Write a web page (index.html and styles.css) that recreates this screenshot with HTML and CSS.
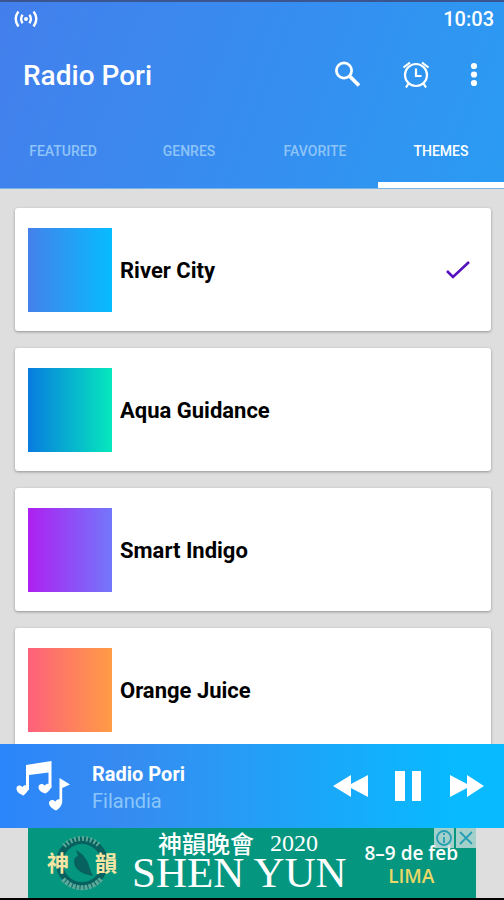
FILE: index.html
```html
<!DOCTYPE html>
<html lang="en">
<head>
<meta charset="utf-8">
<meta name="viewport" content="width=device-width, initial-scale=1">
<title>Radio Pori</title>
<link rel="stylesheet" href="styles.css">
</head>
<body>
<header class="header">
  <div class="status">
    <svg class="cast" viewBox="0 0 24 18" aria-hidden="true">
      <circle cx="12" cy="9" r="2"/>
      <path d="M8.6 4.8Q5.6 9 8.6 13.2M15.4 4.8Q18.4 9 15.4 13.2M4.4 1.5Q-1 9 4.4 16.5M19.6 1.5Q25 9 19.6 16.5"/>
    </svg>
    <time>10:03</time>
  </div>
  <div class="toolbar">
    <h1>Radio Pori</h1>
    <button class="tool" aria-label="Search">
      <svg viewBox="0 0 28 28"><g fill="none" stroke="#fff" stroke-width="2.800"><circle cx="10" cy="9.500" r="7.600"/><path d="M15.500 15L25 24.500" stroke-width="3.800"/></g></svg>
    </button>
    <button class="tool" aria-label="Alarm">
      <svg viewBox="0 0 28 28"><g fill="none" stroke="#fff" stroke-width="2.200"><circle cx="14" cy="14" r="11"/><path d="M14 7.500v7.500h5.500M1.500 6.500L8 1.500M26.500 6.500L20 1.500M6.500 22.500L4 26.500M21.500 22.500L24 26.500"/></g></svg>
    </button>
    <button class="tool more" aria-label="More options">
      <svg viewBox="0 0 28 28"><g fill="#fff"><circle cx="14" cy="5" r="3.100"/><circle cx="14" cy="13.500" r="3.100"/><circle cx="14" cy="22" r="3.100"/></g></svg>
    </button>
  </div>
  <nav class="tabs">
    <a href="#featured">FEATURED</a>
    <a href="#genres">GENRES</a>
    <a href="#favorite">FAVORITE</a>
    <a href="#themes" class="active" aria-current="page">THEMES</a>
  </nav>
</header>

<main class="themes">
  <button class="card">
    <span class="swatch river"></span>
    <span class="name">River City</span>
    <svg class="check" viewBox="0 0 26 20" aria-label="Selected"><path d="M2 11l6 6L24 2"/></svg>
  </button>
  <button class="card">
    <span class="swatch aqua"></span>
    <span class="name">Aqua Guidance</span>
  </button>
  <button class="card">
    <span class="swatch indigo"></span>
    <span class="name">Smart Indigo</span>
  </button>
  <button class="card">
    <span class="swatch orange"></span>
    <span class="name">Orange Juice</span>
  </button>
</main>

<section class="player">
  <svg class="notes" viewBox="0 0 54 50" aria-hidden="true">
    <path d="M10 4L35.500 0V27H32.500V11.500L13 14V29H10Z"/>
    <path d="M12.700 26C11 24 8 23.500 6.500 26C4 23 0 24.500 .5 28C1 31.500 4 33 7.500 34.500C10 32.500 13 29.500 12.700 26Z"/>
    <path d="M35.300 24C33 22 30.500 22.500 28.800 24.500C26.500 21.500 22 23 22.500 26.500C23 30 26 31.500 29.500 32.500C32.500 30.500 35.500 28 35.300 24Z"/>
    <path d="M43.500 17L54 23.500L46.200 27V42H43.500Z"/>
    <path d="M46 40C44 37.500 41 38 39.500 40.500C37 37.500 32.500 39 33 42.500C33.500 46 37 48 40 49.500C43.500 47.500 46.500 44 46 40Z"/>
  </svg>
  <div class="track">
    <strong>Radio Pori</strong>
    <span>Filandia</span>
  </div>
  <div class="controls">
    <button aria-label="Previous"><svg viewBox="0 0 36 36"><path d="M0 18L18 7v9L35 7v22L18 20v9Z"/></svg></button>
    <button aria-label="Pause"><svg viewBox="0 0 36 36"><path d="M4 3h10v30H4ZM21 3h9v30h-9Z"/></svg></button>
    <button aria-label="Next"><svg viewBox="0 0 36 36"><path d="M35 18L18 7v9L1 7v22L18 20v9Z"/></svg></button>
  </div>
</section>

<aside class="ad-strip">
  <div class="ad">
    <svg class="emblem" viewBox="0 0 72 62" aria-hidden="true">
      <circle cx="36" cy="31" r="22.500" fill="none" stroke="#07625f" stroke-width="7"/>
      <g fill="none" stroke="#5ca99a" stroke-width="5">
        <path d="M18 14A25 25 0 0 1 54 14" stroke-dasharray="2 2"/>
        <path d="M17 47A25 25 0 0 0 55 47" stroke-dasharray="3 1"/>
      </g>
      <path d="M30 18C33 20 37 22 39 26C43 30 43 37 47 44C40 43 32 40 29 34C27 29 28 25 32 24Z" fill="#07625f"/>
      <g class="emblem-text"><text x="1" y="39">神</text><text x="49" y="39">韻</text></g>
    </svg>
    <div class="show">
      <div class="subtitle"><span class="cjk">神韻晚會</span> <span>2020</span></div>
      <div class="brand">SHEN YUN</div>
    </div>
    <div class="dates"><span>8–9 de feb</span><span class="city">LIMA</span></div>
    <div class="ad-actions">
      <button aria-label="Ad information"><svg viewBox="0 0 20 20"><circle cx="10" cy="10" r="7"/><path d="M10 9v6M10 5v2"/></svg></button>
      <button aria-label="Close ad"><svg viewBox="0 0 20 20"><path d="M4 4l12 12M16 4L4 16"/></svg></button>
    </div>
  </div>
</aside>
</body>
</html>
```
FILE: styles.css
```css
* { box-sizing: border-box; }

body {
  margin: 0;
  height: 100vh;
  display: flex;
  flex-direction: column;
  overflow: hidden;
  background: #dedede;
  font-family: Roboto, "Noto Sans CJK TC", sans-serif;
}

button {
  border: 0;
  padding: 0;
  background: none;
  color: inherit;
  font: inherit;
}

svg { display: block; }

.header {
  flex: none;
  color: #fff;
  border-top: 2px solid #3b5590;
  border-bottom: 1px solid #79b5e8;
  background: linear-gradient(110deg, #437fec, #378df0 50%, #2a9bf2);
}

.status {
  display: flex;
  align-items: center;
  justify-content: space-between;
  height: 34px;
  padding: 0 10px 0 14px;
  font-size: 20px;
  font-weight: 500;
}

.cast {
  width: 24px;
  height: 18px;
  fill: #fff;
}

.cast path {
  fill: none;
  stroke: #fff;
  stroke-width: 2.4;
}

.toolbar {
  display: flex;
  align-items: center;
  height: 78px;
  padding: 0 16px 0 23px;
}

.toolbar h1 {
  flex: 1;
  margin: 0;
  font-size: 28px;
  font-weight: 500;
}

.tool {
  width: 28px;
  margin-left: 40px;
}

.tool svg { width: 28px; height: 28px; }

.more { margin-left: 30px; }

.tabs {
  display: grid;
  grid-template-columns: repeat(4, 1fr);
  height: 74px;
}

.tabs a {
  display: flex;
  align-items: center;
  justify-content: center;
  border-top: 6px solid transparent;
  border-bottom: 6px solid transparent;
  color: #8ec4f8;
  font-size: 14px;
  font-weight: 500;
  text-decoration: none;
}

.tabs .active {
  color: #fff;
  border-bottom-color: #fff;
}

.themes {
  flex: 1;
  min-height: 0;
  overflow: hidden;
  display: flex;
  flex-direction: column;
  gap: 17px;
  padding: 19px 13px 0 15px;
}

.card {
  flex: none;
  display: flex;
  align-items: center;
  gap: 8px;
  height: 123px;
  padding: 0 20px 0 13px;
  border-radius: 3px;
  background: #fff;
  box-shadow: 0 1px 3px rgba(0, 0, 0, .35);
  color: #000;
  font-size: 22px;
  font-weight: 700;
  text-align: left;
}

.swatch { width: 84px; height: 84px; }
.river { background: linear-gradient(90deg, #4481ea, #06bcff); }
.aqua { background: linear-gradient(90deg, #087be0, #06e8bd); }
.indigo { background: linear-gradient(90deg, #ae20f0, #7377fb); }
.orange { background: linear-gradient(90deg, #fd617b, #ff9c45); }

.name {
  flex: 1;
  padding-top: 2px;
}

.check {
  width: 26px;
  height: 20px;
  fill: none;
  stroke: #5411bd;
  stroke-width: 2.6;
}

.player {
  flex: none;
  display: flex;
  align-items: center;
  height: 84px;
  padding: 0 19px 0 16px;
  color: #fff;
  background: linear-gradient(90deg, #2a86fa, #378bf0 24%, #08baff 90%);
}

.notes {
  width: 54px;
  height: 50px;
  margin-right: 22px;
  fill: #fff;
}

.track {
  flex: 1;
  display: flex;
  flex-direction: column;
  padding-top: 3px;
  font-size: 20px;
  line-height: 27px;
}

.track strong { font-weight: 700; }
.track span { color: #8bc6fb; }

.controls { display: flex; gap: 22px; }
.controls svg { width: 36px; height: 36px; fill: #fff; }

.ad-strip {
  flex: none;
  border-bottom: 2px solid #000;
}

.ad {
  position: relative;
  display: flex;
  align-items: center;
  max-width: 448px;
  height: 70px;
  margin: 0 auto;
  padding: 0 18px;
  overflow: hidden;
  background: #04967f;
  color: #fff;
}

.emblem { width: 72px; height: 62px; }

.emblem-text {
  fill: #f5e5a4;
  font-family: "Noto Sans CJK TC", sans-serif;
  font-size: 22px;
  font-weight: 700;
}

.show {
  flex: 1;
  margin-left: 14px;
  padding-bottom: 6px;
  font-family: "Liberation Serif", "Noto Sans CJK TC", serif;
  white-space: nowrap;
}

.subtitle {
  display: flex;
  gap: 16px;
  padding-left: 26px;
  font-size: 24px;
  line-height: 26px;
}

.cjk {
  font-family: "Noto Sans CJK TC", sans-serif;
  font-weight: 500;
}

.brand {
  font-size: 43px;
  line-height: 34px;
}

.dates {
  display: flex;
  flex-direction: column;
  align-items: center;
  padding-top: 4px;
  font-family: "Open Sans", sans-serif;
  font-size: 19px;
  font-weight: 600;
  line-height: 23px;
  white-space: nowrap;
}

.city { color: #ebd766; }

.ad-actions {
  position: absolute;
  top: 0;
  right: 0;
  display: flex;
  gap: 2px;
}

.ad-actions button { background: rgba(205, 222, 222, .8); }

.ad-actions svg {
  width: 20px;
  height: 20px;
  fill: none;
  stroke: #269fb5;
  stroke-width: 1.8;
}
```
